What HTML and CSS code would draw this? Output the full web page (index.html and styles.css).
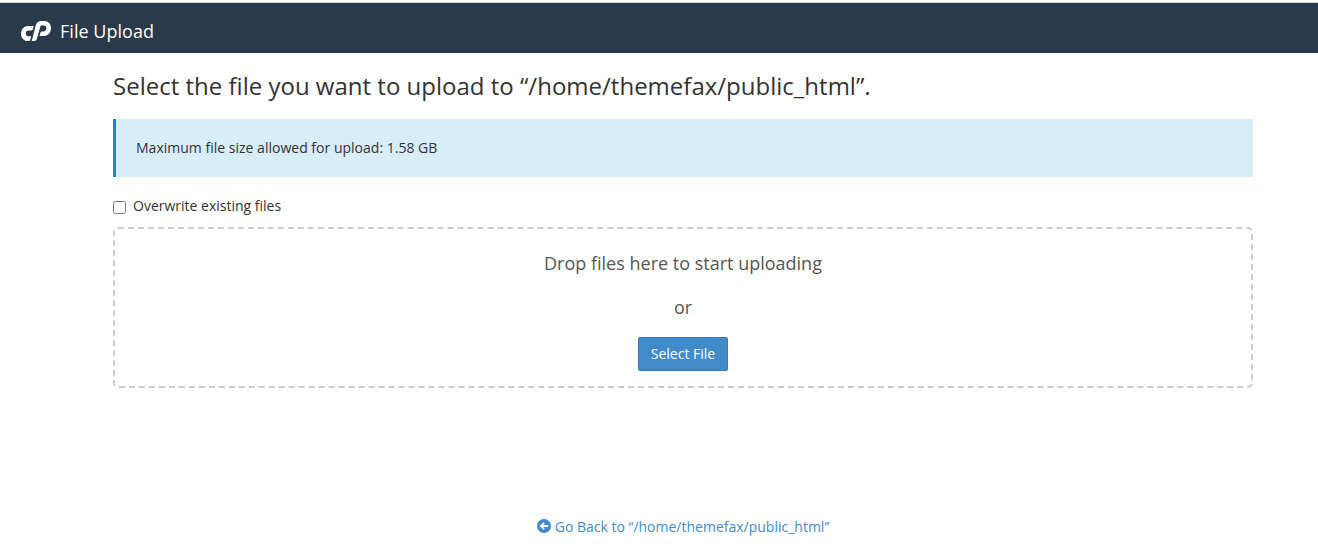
FILE: index.html
```html
<!DOCTYPE html>
<html lang="en">
<head>
<meta charset="utf-8">
<title>File Upload</title>
<link rel="stylesheet" href="styles.css">
</head>
<body>
<header class="topbar">
  <svg class="logo" viewBox="0 0 30 20" width="30" height="20" aria-hidden="true">
    <path d="M12.800 5H7.200C3 5 0 8.300 0 12.700C0 17 3 20 6.500 20H9L10.200 15.300H7.300C5.700 15.300 4.800 14.200 4.800 12.600C4.800 10.900 5.900 9.600 7.500 9.600H10C11 9.600 11.600 9.100 11.800 8.300Z"/>
    <path d="M10.700 20L14.800 4.300C15.600 1.500 17.600 0 20.300 0H23.500C27.500 0 30 3 30 7C30 11.700 26.800 15.100 22.500 15.100H18.500L19.600 11.200C19.800 10.700 20.200 10.500 20.800 10.500H22.300C24.300 10.500 25.400 9.100 25.400 7.300C25.400 5.600 24.500 4.600 22.800 4.600H20.800C20 4.600 19.500 4.900 19.300 5.700L15.900 17.800C15.500 19.300 14.500 20 13.100 20Z"/>
  </svg>
  <span class="app-name">File Upload</span>
</header>
<main class="content">
  <h1 class="title">Select the file you want to upload to “/home/themefax/public_html”.</h1>
  <div class="callout">Maximum file size allowed for upload: 1.58 GB</div>
  <label class="overwrite"><input class="check" type="checkbox"><span>Overwrite existing files</span></label>
  <section class="dropzone">
    <p class="hint">Drop files here to start uploading</p>
    <p class="hint">or</p>
    <button class="select-btn" type="button">Select File</button>
  </section>
  <a class="back">
    <svg class="back-icon" viewBox="0 0 14 14" width="14" height="14" aria-hidden="true">
      <circle cx="7" cy="7" r="7"/>
      <path d="M2.500 7L6.500 3.200L7.700 4.400L6.200 6H11.200V8H6.200L7.700 9.600L6.500 10.800Z"/>
    </svg>
    <span>Go Back to “/home/themefax/public_html”</span>
  </a>
</main>
</body>
</html>
```
FILE: styles.css
```css
* { box-sizing: border-box; }
body {
  margin: 0;
  padding-top: 2px;
  background: #fff;
  color: #333;
  font: 14px/20px "Open Sans", sans-serif;
  overflow: hidden;
}
.topbar {
  display: flex;
  align-items: center;
  height: 51px;
  padding: 5px 21px 0;
  border-top: 1px solid #d5d9dc;
  background: #293a4a;
  color: #fff;
}
.logo { fill: #fff; margin-right: 9px; }
.app-name { font-size: 18px; line-height: 26px; letter-spacing: 0.03px; }
.content {
  display: flex;
  flex-direction: column;
  width: 1140px;
  margin-left: 113px;
}
.title {
  margin: 19px 0 20px;
  font-size: 24px;
  font-weight: 400;
  line-height: 27px;
  letter-spacing: 0.005px;
}
.callout {
  height: 58px;
  padding: 19px 20px;
  border-left: 3px solid #2a80b9;
  background: #d7edf9;
  letter-spacing: 0.01px;
}
.overwrite {
  display: flex;
  align-items: center;
  gap: 7px;
  margin-top: 19px;
}
.check { width: 13px; height: 13px; margin: 3px 0 0; }
.dropzone {
  display: flex;
  flex-direction: column;
  align-items: center;
  height: 161px;
  margin-top: 11px;
  padding-top: 21px;
  border: 2px dashed #ccc;
  border-radius: 5px;
}
.hint {
  margin: 0 0 18px;
  color: #555;
  font-size: 18px;
  line-height: 26px;
}
.select-btn {
  width: 90px;
  height: 34px;
  margin-top: -1px;
  padding: 0;
  border: 1px solid #357ebd;
  border-radius: 2px;
  background: #428bca;
  color: #fff;
  font: inherit;
}
.back {
  display: flex;
  align-self: center;
  align-items: center;
  gap: 4px;
  margin-top: 129px;
  color: #428bca;
}
.back-icon { margin-top: -2px; }
.back-icon circle { fill: #428bca; }
.back-icon path { fill: #fff; }
```
